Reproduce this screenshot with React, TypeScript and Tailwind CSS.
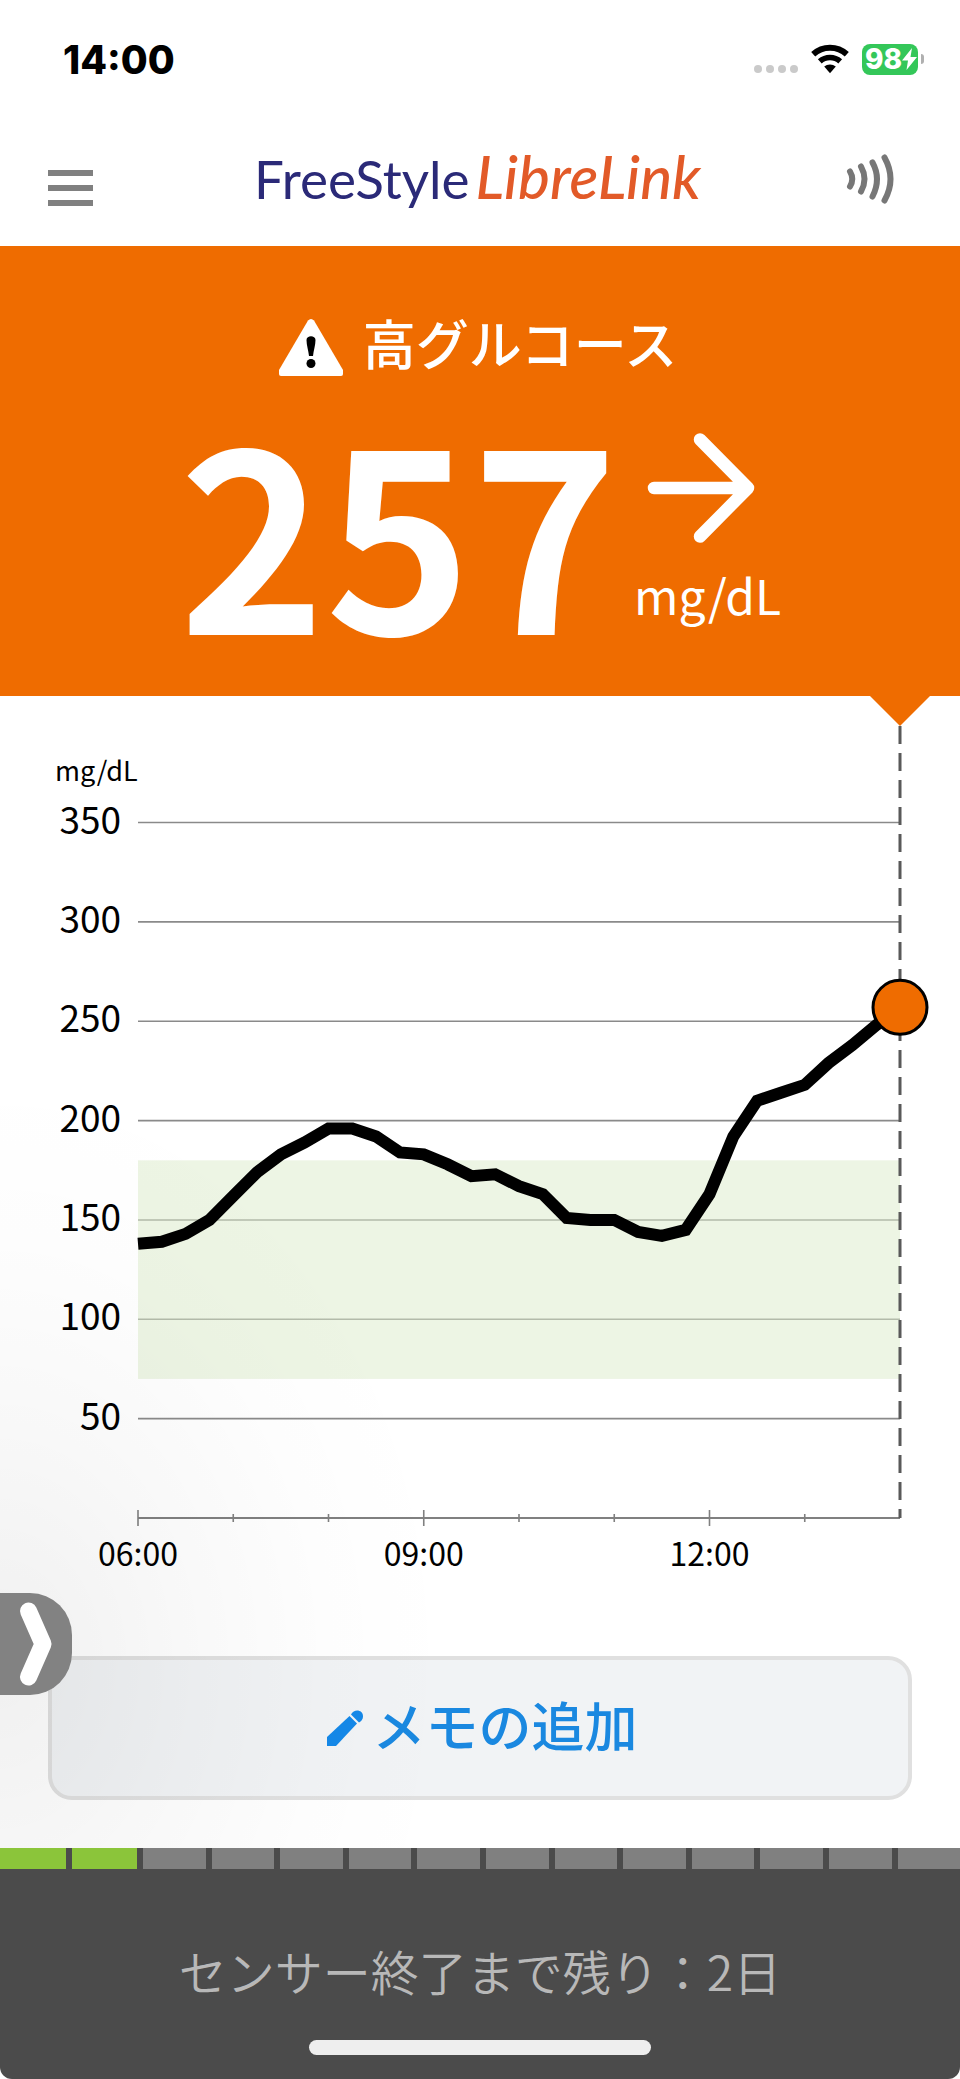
// App.tsx
const READINGS = [
    138, 139, 143, 150, 162, 174, 183, 189, 196, 196, 192, 184, 183, 178, 172, 173, 167,
    163, 151, 150, 150, 144, 142, 145, 163, 192, 210, 214, 218, 229, 238, 248, 257,
];

const LEVELS = [350, 300, 250, 200, 150, 100, 50];

const DAYS_TOTAL = 14;
const DAYS_LEFT = 2;

// Plot area inside the chart's viewBox
const LEFT = 138;
const RIGHT = 900;
const ZERO = 822;
const STEP = (RIGHT - LEFT) / (READINGS.length - 1);

const toY = (value: number) => ZERO - value * 1.987;

function StatusBar() {
    return (
        <div className="flex h-[118px] items-center justify-between pl-[63px] pr-9">
            <span className="font-['Inter',sans-serif] text-[39px] leading-none font-extrabold text-black">14:00</span>
            <div className="flex items-center gap-3">
                <div className="flex gap-1 pt-5">
                    <span className="size-2 rounded-full bg-[#cacaca]" />
                    <span className="size-2 rounded-full bg-[#cacaca]" />
                    <span className="size-2 rounded-full bg-[#cacaca]" />
                    <span className="size-2 rounded-full bg-[#cacaca]" />
                </div>
                <svg className="h-[30px] w-10" viewBox="0 0 40 30" aria-hidden="true">
                    <path d="M3.2 10.2a25 25 0 0 1 33.6 0" fill="none" stroke="#000" strokeWidth="6" />
                    <path d="M9.8 17.4a15.200 15.200 0 0 1 20.400 0" fill="none" stroke="#000" strokeWidth="5.600" />
                    <path d="M14.200 22.600a9 9 0 0 1 11.600 0L20 29.200z" fill="#000" />
                </svg>
                <div className="flex items-center gap-[3px]">
                    <div className="flex h-[31px] w-14 items-center rounded-lg bg-[#34c759] pl-[3px]">
                        <span className="font-['Inter',sans-serif] text-[28px] leading-none font-extrabold text-white">98</span>
                        <svg className="h-[22px] w-[15px]" viewBox="0 0 15 22" aria-hidden="true">
                            <path d="M10 0 0 12.500h6L4.500 22 15 9H8.500z" fill="#fff" />
                        </svg>
                    </div>
                    <span className="h-2.5 w-[3px] rounded-r-full bg-[#b0b0b0]" />
                </div>
            </div>
        </div>
    );
}

function NavBar() {
    return (
        <div className="flex h-32 items-center justify-between pl-12 pr-[66px]">
            <button type="button" aria-label="メニュー" className="flex flex-col gap-[9px] pt-3">
                <span className="h-1.5 w-[45px] bg-[#808080]" />
                <span className="h-1.5 w-[45px] bg-[#808080]" />
                <span className="h-1.5 w-[45px] bg-[#808080]" />
            </button>
            <h1 className="flex items-baseline gap-1.5 pb-2.5 pl-4 font-['Lato',sans-serif] leading-[64px]">
                <span className="text-[53px] text-[#2b2a78]">FreeStyle</span>
                <span className="text-[60px] font-medium text-[#e25a28] italic">LibreLink</span>
            </h1>
            <button type="button" aria-label="スキャン" className="pb-1.5">
                <svg className="h-[50px] w-12" viewBox="0 0 48 50" fill="none" stroke="#777" strokeWidth="6" strokeLinecap="round">
                    <path d="M4 17.500q4.500 7.500 0 15" />
                    <path d="M15 12.500q7 12.500 0 25" />
                    <path d="M26.500 8.500q9 16.500 0 34" />
                    <path d="M38.500 3.500q12 21.500 0 43" />
                </svg>
            </button>
        </div>
    );
}

function GlucoseBanner() {
    return (
        <section className="bg-[#ef6c00] pt-16 pb-11 text-white">
            <div className="flex items-center justify-center gap-5">
                <svg className="mt-2 h-[58px] w-16" viewBox="0 0 64 58" aria-hidden="true">
                    <path d="M29 1.500q3-3 6 0L64 51v4q0 2-2 2H2q-2 0-2-2v-4z" fill="#fff" />
                    <path d="M27.500 21c0-5 9-5 9 0 0 5-2 11-2.500 16h-4c-.5-5-2.500-11-2.500-16z" fill="#000" />
                    <circle cx="32" cy="44.500" r="4.500" fill="#000" />
                </svg>
                <h2 className="pr-1 pb-1 text-[53px] leading-[64px] font-medium">高グルコース</h2>
            </div>
            <div className="mt-6 flex justify-center gap-4">
                <span className="text-[248px] leading-[250px] font-bold">257</span>
                <div className="flex flex-col items-start gap-[26px] pt-[30px]">
                    <svg className="ml-3 h-28 w-28" viewBox="0 0 112 112" fill="none" stroke="#fff" strokeWidth="12.500" strokeLinecap="round" strokeLinejoin="round" aria-hidden="true">
                        <path d="M8 56h94M54 7.500 102 56 54 104.500" />
                    </svg>
                    <span className="text-5xl leading-none">mg/dL</span>
                </div>
            </div>
        </section>
    );
}

function GlucoseChart() {
    const line = READINGS.map((value, i) => `${LEFT + i * STEP},${toY(value)}`).join(' ');
    const last = READINGS[READINGS.length - 1];

    return (
        <svg className="block w-full" viewBox="0 0 960 912" role="img" aria-label="グルコースグラフ">
            <path d="M870 0h60l-30 30z" fill="#ef6c00" />

            {/* Horizontal levels */}
            <text x="55" y="85" fontSize="27">mg/dL</text>
            {LEVELS.map((level) => (
                <g key={level}>
                    <text x="121" y={toY(level) + 11} fontSize="37" textAnchor="end">{level}</text>
                    <path d={`M${LEFT} ${toY(level)}H${RIGHT}`} stroke="#8a8a8a" strokeWidth="1.600" />
                </g>
            ))}

            {/* Target range */}
            <rect x={LEFT} y={toY(180)} width={RIGHT - LEFT} height={toY(70) - toY(180)} fill="#dbebc9" fillOpacity="0.5" />

            {/* Time axis */}
            <path d={`M${LEFT} ${ZERO}H${RIGHT}`} stroke="#808080" strokeWidth="2" />
            {[0, 1, 2, 3, 4, 5, 6, 7].map((hour) => {
                const x = LEFT + hour * 4 * STEP;
                const half = hour % 3 === 0 ? 8 : 4;
                return <path key={hour} d={`M${x} ${ZERO - half}V${ZERO + half}`} stroke="#808080" strokeWidth="1.600" />;
            })}
            {['06:00', '09:00', '12:00'].map((label, i) => (
                <text key={label} x={LEFT + i * 12 * STEP} y="870" fontSize="32" textAnchor="middle">{label}</text>
            ))}

            {/* Current time and readings */}
            <path d={`M${RIGHT} 30V${ZERO}`} stroke="#595959" strokeWidth="3" strokeDasharray="18 9" />
            <polyline points={line} fill="none" stroke="#000" strokeWidth="12" />
            <circle cx={RIGHT} cy={toY(last)} r="27" fill="#ef6c00" stroke="#000" strokeWidth="3" />
        </svg>
    );
}

function NoteButton() {
    return (
        <div className="px-12 py-12">
            <button type="button" className="flex h-36 w-full items-center justify-center gap-2.5 rounded-3xl border-4 border-[#e0e0e0] bg-[#f1f3f5] pl-1 text-[#1a88e0]">
                <svg className="size-9" viewBox="0 0 36 36" fill="#1488e8" aria-hidden="true">
                    <path d="M0 27 22.500 6 30 13.500 9 36H0z" />
                    <path d="M24 4.500c3-6 12-5 12 2 0 3-2 5-4 6z" />
                </svg>
                <span className="pb-2 text-[53px] leading-[64px] font-medium">メモの追加</span>
            </button>
        </div>
    );
}

function SensorFooter() {
    return (
        <footer className="overflow-hidden rounded-b-xl bg-[#4b4b4b]">
            <div className="flex h-[21px] gap-1.5">
                {Array.from({ length: DAYS_TOTAL }, (_, i) => (
                    <span key={i} className={i < DAYS_LEFT ? 'grow-[131] bg-[#8bc53a]' : 'grow-[125] bg-[#808080]'} />
                ))}
            </div>
            <p className="pt-[69px] text-center text-5xl leading-[64px] font-[350] text-[#b8b8b8]">センサー終了まで残り：2日</p>
            <div className="mx-auto mt-[38px] mb-6 h-[15px] w-[342px] rounded-full bg-[#eee]" />
        </footer>
    );
}

export default function App() {
    return (
        <div lang="ja" className="bg-white font-['Noto_Sans_CJK_JP',sans-serif] text-black">
            <header>
                <StatusBar />
                <NavBar />
            </header>
            <GlucoseBanner />
            <main className="relative">
                <GlucoseChart />
                <NoteButton />
                {/* Soft shade behind the side tab */}
                <div className="pointer-events-none absolute inset-0 bg-[radial-gradient(460px_600px_at_0_84%,rgba(0,0,0,0.06),rgba(0,0,0,0.028)_40%,rgba(0,0,0,0.008)_72%,transparent)]" />
                <button type="button" aria-label="開く" className="absolute bottom-[153px] left-0 h-[102px] w-[72px] rounded-r-[42px] bg-[#828282]">
                    <svg className="h-full w-full" viewBox="0 0 72 102" fill="none" stroke="#fff" strokeWidth="17" strokeLinecap="round" strokeLinejoin="round">
                        <path d="M28.500 18 43 51 28.500 84" />
                    </svg>
                </button>
            </main>
            <SensorFooter />
        </div>
    );
}
